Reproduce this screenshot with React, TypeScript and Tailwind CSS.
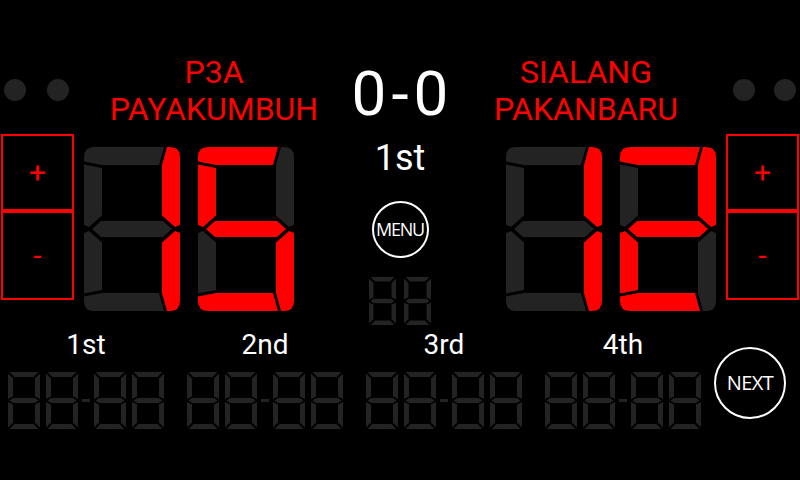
import React from "react";

const RED = "#ff0000";
const DIM = "#232323";

const BIG: Record<string, string> = {
  A: "M0,14.5 L0,10 Q0,0 10,0 L80,0 L75,18 L18,18 Z",
  B: "M83,0 L86,0 Q96,0 96,10 L96,78 L91,80 L78,68.5 L78,18 Z",
  C: "M83,164 L86,164 Q96,164 96,154 L96,86 L91,84 L78,95.5 L78,146 Z",
  D: "M0,149.5 L0,154 Q0,164 10,164 L80,164 L75,146 L18,146 Z",
  E: "M0,146.5 L18,143 L18,95.5 L5,84 L0,86 Z",
  F: "M0,17.5 L18,21 L18,68.5 L5,80 L0,78 Z",
  G: "M8,82 L17,74 L79,74 L88,82 L79,90 L17,90 Z",
};

const DIGIT_SEGS: Record<string, string> = {
  "1": "BC",
  "2": "ABGED",
  "5": "AFGCD",
  "8": "ABCDEFG",
};

function BigDigit({ value }: { value: string }) {
  const on = DIGIT_SEGS[value] || "";
  return (
    <svg width={96} height={164} viewBox="0 0 96 164" className="block">
      {Object.keys(BIG).map((k) => (
        <path key={k} d={BIG[k]} fill={on.includes(k) ? RED : DIM} />
      ))}
    </svg>
  );
}

function thinSegs(W: number, H: number, t: number, d: number) {
  const c = H / 2;
  const p = (pts: number[][]) => "M" + pts.map((q) => q.join(",")).join(" L") + " Z";
  return [
    p([[d, 0], [W - d, 0], [W - d - t, t], [d + t, t]]),
    p([[W, d], [W, c - d], [W - t, c - t / 2 - d], [W - t, t + d]]),
    p([[W, H - d], [W, c + d], [W - t, c + t / 2 + d], [W - t, H - t - d]]),
    p([[d, H], [W - d, H], [W - d - t, H - t], [d + t, H - t]]),
    p([[0, H - d], [0, c + d], [t, c + t / 2 + d], [t, H - t - d]]),
    p([[0, d], [0, c - d], [t, c - t / 2 - d], [t, t + d]]),
    p([[d, c], [t, c - t / 2], [W - t, c - t / 2], [W - d, c], [W - t, c + t / 2], [t, c + t / 2]]),
  ];
}

function ThinDigit({ w, h, t }: { w: number; h: number; t: number }) {
  const segs = thinSegs(w, h, t, 1.5);
  return (
    <svg width={w} height={h} viewBox={`0 0 ${w} ${h}`} className="block">
      {segs.map((d, i) => (
        <path key={i} d={d} fill={DIM} />
      ))}
    </svg>
  );
}

function SetScore({ label }: { label: string }) {
  return (
    <div className="w-[158px] flex flex-col items-center">
      <span className="text-white text-[28px] leading-[28px]">{label}</span>
      <div className="mt-[13px] flex items-center">
        <ThinDigit w={32} h={57} t={5} />
        <div className="w-[6px]" />
        <ThinDigit w={32} h={57} t={5} />
        <div className="mx-[4px] w-[8px] h-[3px] bg-[#232323]" />
        <ThinDigit w={32} h={57} t={5} />
        <div className="w-[6px]" />
        <ThinDigit w={32} h={57} t={5} />
      </div>
    </div>
  );
}

function Dot() {
  return <div className="w-[22px] h-[22px] rounded-full bg-[#232323]" />;
}

function Boxes() {
  return (
    <div className="flex flex-col w-[73px]">
      <div className="h-[77px] border-2 border-[#ff0000] flex items-center justify-center text-[#ff0000] text-[30px] leading-none">
        +
      </div>
      <div className="h-[89px] border-2 border-[#ff0000] flex items-center justify-center text-[#ff0000] text-[30px] leading-none">
        -
      </div>
    </div>
  );
}

export default function App() {
  return (
    <div className="w-[800px] h-[480px] bg-black overflow-hidden flex flex-col font-[Roboto,sans-serif]">
      {/* Top band */}
      <div className="flex h-[134px] pt-[54px]">
        <div className="w-[84px] flex gap-[21px] pl-[4px] pt-[25px] items-start">
          <Dot />
          <Dot />
        </div>
        <div className="w-[260px] flex flex-col items-center text-[32px] leading-[37px] text-[#ff0000]">
          <span>P3A</span>
          <span>PAYAKUMBUH</span>
        </div>
        <div className="w-[112px] flex justify-center items-start text-white text-[62px] leading-[62px] pt-[9px]">
          <span>0</span>
          <span className="mx-[5px]">-</span>
          <span>0</span>
        </div>
        <div className="w-[260px] flex flex-col items-center text-[32px] leading-[37px] text-[#ff0000]">
          <span>SIALANG</span>
          <span>PAKANBARU</span>
        </div>
        <div className="w-[84px] flex gap-[19px] pl-[17px] pt-[25px] items-start">
          <Dot />
          <Dot />
        </div>
      </div>

      {/* Middle band */}
      <div className="flex h-[196px] pl-[1px]">
        <Boxes />
        <div className="ml-[10px] mt-[13px] flex gap-[18px] items-start">
          <BigDigit value="1" />
          <BigDigit value="5" />
        </div>
        <div className="w-[212px] flex flex-col items-center">
          <span className="mt-[6px] text-white text-[36px] leading-[36px]">1st</span>
          <div className="mt-[25px] w-[57px] h-[57px] rounded-full border-2 border-white flex items-center justify-center text-white text-[18px] tracking-[-1.2px] font-['Open_Sans',sans-serif]">
            MENU
          </div>
          <div className="mt-[19px] flex gap-[8px]">
            <ThinDigit w={27} h={48} t={4.5} />
            <ThinDigit w={27} h={48} t={4.5} />
          </div>
        </div>
        <div className="mt-[13px] flex gap-[18px] items-start">
          <BigDigit value="1" />
          <BigDigit value="2" />
        </div>
        <div className="ml-[10px]">
          <Boxes />
        </div>
      </div>

      {/* Bottom band */}
      <div className="flex pl-[7px] pt-[1px] items-start">
        <div className="flex gap-[21px]">
          <SetScore label="1st" />
          <SetScore label="2nd" />
          <SetScore label="3rd" />
          <SetScore label="4th" />
        </div>
        <div className="ml-[12px] mt-[16px] w-[72px] h-[72px] rounded-full border-2 border-white flex items-center justify-center text-white text-[20px] tracking-[-0.5px] font-['Open_Sans',sans-serif]">
          NEXT
        </div>
      </div>
    </div>
  );
}
